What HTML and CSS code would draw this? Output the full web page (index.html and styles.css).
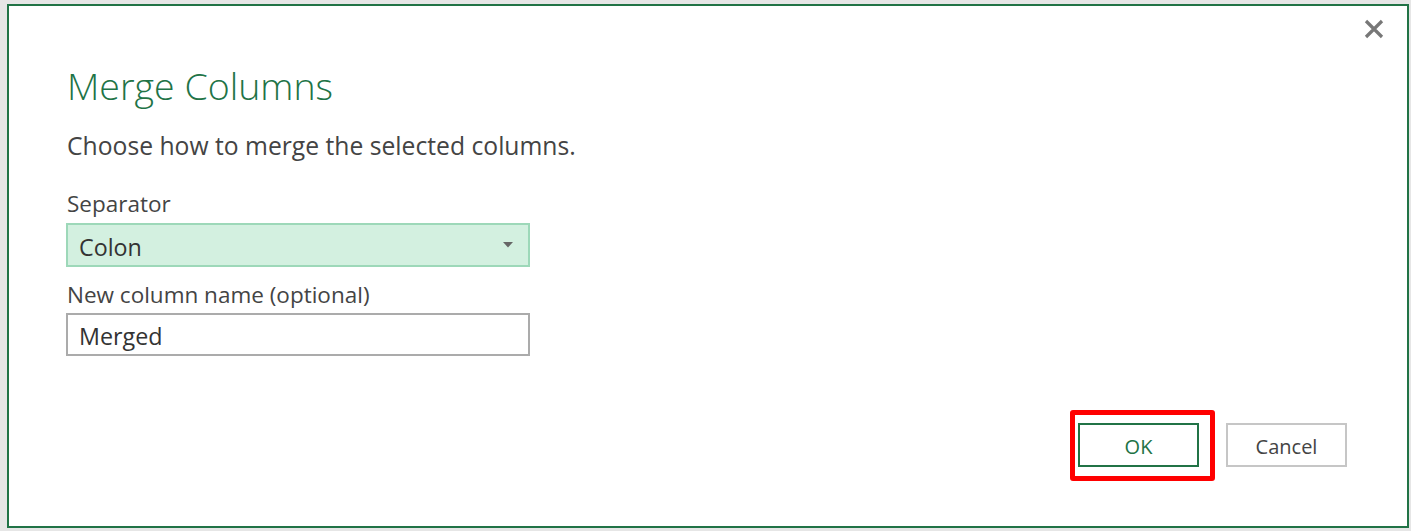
FILE: index.html
```html
<!DOCTYPE html>
<html lang="en">
<head>
<meta charset="utf-8">
<title>Merge Columns</title>
<link rel="stylesheet" href="styles.css">
</head>
<body>
<div class="dialog">
  <button class="close" aria-label="Close">
    <svg width="20" height="20" viewBox="0 0 20 20"><path d="M2 2 L18 18 M18 2 L2 18" stroke="#777" stroke-width="3.2" fill="none"/></svg>
  </button>
  <h1 class="title">Merge Columns</h1>
  <p class="subtitle">Choose how to merge the selected columns.</p>
  <div class="field">
    <label class="label">Separator</label>
    <div class="combo">
      <span class="combo-value">Colon</span>
      <svg class="caret" width="10" height="6" viewBox="0 0 10 6"><path d="M0 0 H10 L5 5.5 Z" fill="#666"/></svg>
    </div>
  </div>
  <div class="field field-second">
    <label class="label">New column name (optional)</label>
    <div class="textbox"><span class="textbox-value">Merged</span></div>
  </div>
  <div class="footer">
    <div class="highlight">
      <button class="btn btn-ok">OK</button>
    </div>
    <button class="btn btn-cancel">Cancel</button>
  </div>
</div>
</body>
</html>
```

FILE: styles.css
```css
html, body {
  margin: 0;
  padding: 0;
  background: #e6e6e6;
}
body {
  font-family: "Open Sans", "Noto Sans", "Liberation Sans", sans-serif;
  color: #444;
}
.dialog {
  position: relative;
  box-sizing: border-box;
  margin: 4px 2px 0 7px;
  height: 524px;
  background: #fff;
  border: 2px solid #217346;
  padding: 0 0 0 57px;
  display: flex;
  flex-direction: column;
}
.close {
  position: absolute;
  top: 13px;
  right: 23px;
  width: 20px;
  height: 20px;
  padding: 0;
  border: 0;
  background: none;
  display: block;
}
.close svg {
  display: block;
}
.title {
  margin: 55px 0 0 1px;
  font-weight: 300;
  font-size: 37.5px;
  line-height: 50px;
  color: #217346;
}
.subtitle {
  margin: 19px 0 0 1px;
  font-size: 24.7px;
  line-height: 32px;
  color: #444;
}
.field {
  margin-top: 27px;
  display: flex;
  flex-direction: column;
}
.field-second {
  margin-top: 13px;
}
.label {
  margin-left: 1px;
  font-size: 22.5px;
  line-height: 30px;
  color: #444;
}
.combo {
  box-sizing: border-box;
  margin-top: 4px;
  width: 464px;
  height: 44px;
  background: #d3f0e0;
  border: 2px solid #9dd8b9;
  display: flex;
  align-items: center;
  justify-content: space-between;
  padding: 3px 15px 0 11px;
  font-size: 23.3px;
  color: #333;
}
.caret {
  margin-top: -3px;
}
.field-second .textbox {
  margin-top: 3px;
}
.textbox {
  box-sizing: border-box;
  width: 464px;
  height: 43px;
  border: 2px solid #ababab;
  display: flex;
  align-items: center;
  padding: 3px 11px 0;
  font-size: 23.3px;
  color: #333;
}
.footer {
  margin-top: auto;
  margin-bottom: 59px;
  display: flex;
  justify-content: flex-end;
  padding-right: 60px;
  gap: 27px;
}
.highlight {
  position: relative;
}
.highlight::after {
  content: "";
  position: absolute;
  left: -8px;
  right: -16px;
  top: -13px;
  bottom: -14px;
  border: 5px solid #ff0000;
  border-radius: 3px;
}
.btn {
  box-sizing: border-box;
  width: 121px;
  height: 44px;
  background: #fff;
  font-family: "Open Sans", "Noto Sans", "Liberation Sans", sans-serif;
  font-size: 20px;
  color: #444;
  padding: 2px 0 0;
  display: block;
}
.btn-ok {
  border: 2px solid #217346;
  color: #217346;
}
.btn-cancel {
  border: 2px solid #c6c6c6;
}
```
